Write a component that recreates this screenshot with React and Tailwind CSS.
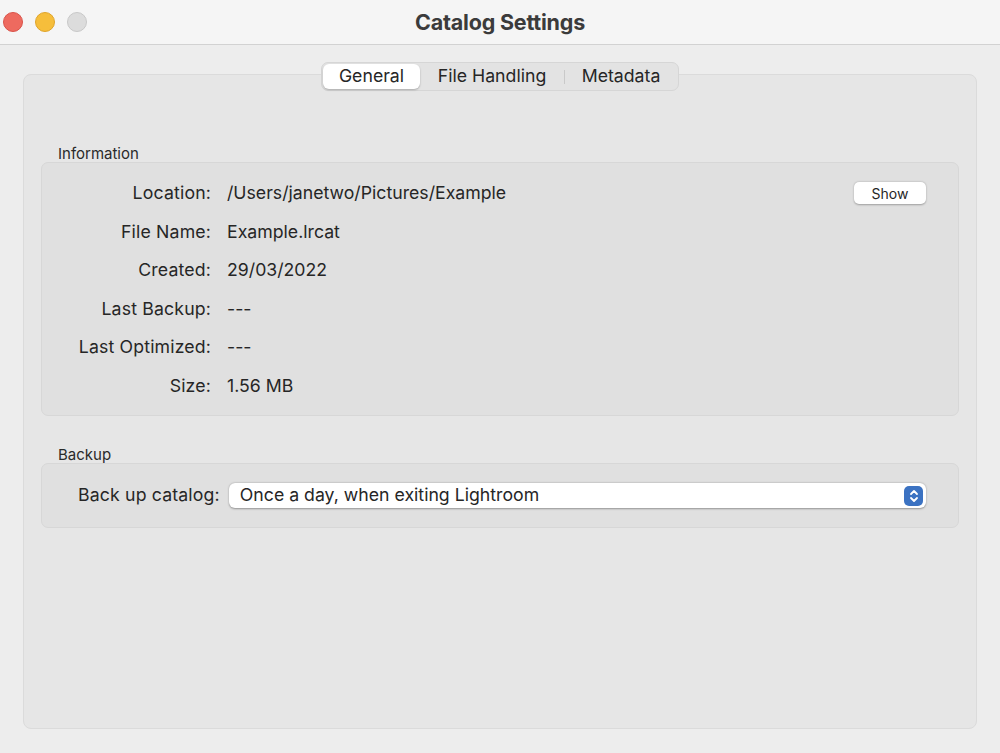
import React from "react";

const rows = [
  { label: "Location:", value: "/Users/janetwo/Pictures/Example", show: true },
  { label: "File Name:", value: "Example.lrcat" },
  { label: "Created:", value: "29/03/2022" },
  { label: "Last Backup:", value: "---" },
  { label: "Last Optimized:", value: "---" },
  { label: "Size:", value: "1.56 MB" },
];

export default function App() {
  return (
    <div
      className="w-full h-[753px] flex flex-col bg-[#ededed] text-[#262626]"
      style={{ fontFamily: "Inter, 'Noto Sans', sans-serif" }}
    >
      {/* title bar */}
      <div className="relative h-[45px] shrink-0 flex items-center bg-[#f5f5f5] border-b border-[#d2d2d2]">
        <div className="flex items-center gap-[12px] pl-[3px]">
          <span className="w-[20px] h-[20px] rounded-full bg-[#ee6a5f] border border-[#d9534a]" />
          <span className="w-[20px] h-[20px] rounded-full bg-[#f6be3b] border border-[#dfa42a]" />
          <span className="w-[20px] h-[20px] rounded-full bg-[#dcdcdc] border border-[#c8c8c8]" />
        </div>
        <div className="absolute inset-0 flex items-center justify-center">
          <span className="text-[21.5px] font-bold text-[#3b3b3b] tracking-[-0.2px]">Catalog Settings</span>
        </div>
      </div>

      {/* body */}
      <div className="flex-1 px-[23px] pt-[29px] pb-[24px] flex">
        <div className="flex-1 flex flex-col rounded-[8px] bg-[#e6e6e6] border border-[#dbdbdb] px-[17px]">
          {/* segmented control */}
          <div className="self-center -mt-[13px] flex items-center h-[29px] p-[1px] rounded-[7px] bg-[#e3e3e3] border border-[#d6d6d6] text-[17.7px]">
            <div className="h-full w-[97px] flex items-center justify-center rounded-[6px] bg-white shadow-[0_1px_2px_rgba(0,0,0,0.25)]">
              General
            </div>
            <div className="h-full w-[144px] flex items-center justify-center">File Handling</div>
            <div className="w-px h-[14px] bg-[#c9c9c9]" />
            <div className="h-full w-[112px] flex items-center justify-center">Metadata</div>
          </div>

          {/* Information */}
          <div className="mt-[54px] pl-[17px] text-[15px] leading-[17px] text-[#2a2a2a]">Information</div>
          <div className="rounded-[7px] bg-[#e0e0e0] border border-[#d7d7d7] pt-[11px] pb-[9px] pr-[32px]">
            {rows.map((r) => (
              <div key={r.label} className="h-[38.6px] flex items-center text-[17.7px]">
                <div className="w-[169px] text-right tracking-[0.15px]">{r.label}</div>
                <div className="ml-[16px] flex-1">{r.value}</div>
                {r.show && (
                  <button className="w-[72px] h-[22px] rounded-[5px] bg-white text-[14px] shadow-[0_0.5px_2px_rgba(0,0,0,0.3)]">
                    Show
                  </button>
                )}
              </div>
            ))}
          </div>

          {/* Backup */}
          <div className="mt-[30px] pl-[17px] text-[15px] leading-[17px] text-[#2a2a2a]">Backup</div>
          <div className="h-[65px] rounded-[7px] bg-[#e0e0e0] border border-[#d7d7d7] flex items-center pt-[1px] pl-[36px] pr-[32px]">
            <span className="text-[17.7px] tracking-[0.15px]">Back up catalog:</span>
            <div className="ml-[9px] flex-1 h-[25px] flex items-center rounded-[6px] bg-white shadow-[0_0.5px_2px_rgba(0,0,0,0.35)] pl-[11px] pr-[3px] text-[17.7px]">
              <span className="flex-1">Once a day, when exiting Lightroom</span>
              <span className="w-[19px] h-[20px] rounded-[5px] bg-[#3b72c2] flex items-center justify-center">
                <svg width="10" height="14" viewBox="0 0 10 14" fill="none" stroke="white" strokeWidth="1.8" strokeLinecap="round" strokeLinejoin="round">
                  <path d="M2 5 L5 2 L8 5" />
                  <path d="M2 9 L5 12 L8 9" />
                </svg>
              </span>
            </div>
          </div>
        </div>
      </div>
    </div>
  );
}
